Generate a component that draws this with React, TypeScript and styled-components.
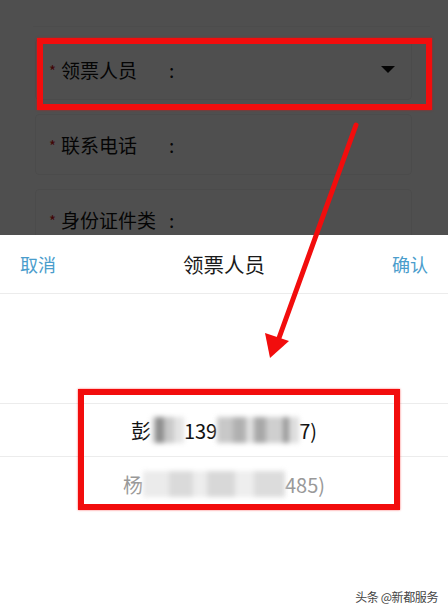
import React from 'react';
import styled, { createGlobalStyle } from 'styled-components';

const GlobalStyle = createGlobalStyle`
  html, body {
    margin: 0;
    padding: 0;
    background: #fff;
  }
  body {
    font-family: 'Noto Sans CJK SC', 'Noto Sans', sans-serif;
  }
`;

const Screen = styled.div`
  position: relative;
  width: 448px;
  height: 612px;
  overflow: hidden;
  display: flex;
  flex-direction: column;
  background: #fff;
`;

const FormArea = styled.div`
  position: relative;
  height: 235px;
  flex-shrink: 0;
  overflow: hidden;
  background: #fff;
`;

const FormGroup = styled.div`
  margin: 26px 18px 0 33px;
  padding: 12px 0 0 2px;
  border-top: 1px solid #f4f4f4;
  display: flex;
  flex-direction: column;
  gap: 14px;
`;

const Field = styled.div`
  width: 377px;
  height: 61px;
  box-sizing: border-box;
  border: 1px solid #f0f0f0;
  border-radius: 4px;
  display: flex;
  align-items: center;
  padding: 0 14px 0 13px;
  font-size: 19px;
  color: #111;
`;

const Star = styled.span`
  color: #d01010;
  font-size: 15px;
  margin-right: 5px;
  position: relative;
  top: 1px;
`;

const Label = styled.span`
  width: 108px;
  white-space: nowrap;
`;

const Colon = styled.span`
  flex: 1;
`;

const Caret = styled.span`
  width: 0;
  height: 0;
  border-left: 7px solid transparent;
  border-right: 7px solid transparent;
  border-top: 7px solid #111;
  margin-right: 2px;
`;

const Dim = styled.div`
  position: absolute;
  inset: 0;
  background: rgba(0, 0, 0, 0.69);
`;

const Sheet = styled.div`
  flex: 1;
  display: flex;
  flex-direction: column;
  background: #fff;
`;

const SheetHeader = styled.div`
  height: 58px;
  display: flex;
  align-items: center;
  justify-content: space-between;
  padding: 0 20px;
  border-bottom: 1px solid #ececec;
  font-size: 18px;
`;

const Action = styled.span`
  color: #4a9dcc;
`;

const Title = styled.span`
  color: #1a1a1a;
  font-size: 20.5px;
`;

const Wheel = styled.div`
  padding-top: 109px;
  display: flex;
  flex-direction: column;
`;

interface OptionProps {
  $active?: boolean;
}
const Option = styled.div<OptionProps>`
  height: 54px;
  box-sizing: border-box;
  display: flex;
  align-items: center;
  justify-content: center;
  font-family: 'Noto Sans CJK SC', Roboto, sans-serif;
  font-size: 20px;
  color: ${(p) => (p.$active ? '#111' : '#999')};
  border-top: ${(p) => (p.$active ? '1px solid #ececec' : 'none')};
  border-bottom: ${(p) => (p.$active ? '1px solid #ececec' : 'none')};
`;

interface MaskProps {
  $w: number;
  $tone: string;
}
const Mask = styled.span<MaskProps>`
  display: inline-block;
  width: ${(p) => p.$w}px;
  height: 26px;
  background: ${(p) => p.$tone};
  filter: blur(2.5px);
`;

const RedBox = styled.div`
  position: absolute;
  border: 6px solid #f20d0d;
  box-sizing: border-box;
  box-shadow: 0 0 2px rgba(255, 0, 0, 0.6);
  pointer-events: none;
`;

const Arrow = styled.svg`
  position: absolute;
  left: 0;
  top: 0;
  pointer-events: none;
`;

const Watermark = styled.div`
  position: absolute;
  right: 10px;
  bottom: 7px;
  font-size: 12px;
  color: #444;
  letter-spacing: -0.4px;
  text-shadow: 0 0 2px #fff;
`;

const fields = ['领票人员', '联系电话', '身份证件类'];

const App = () => {
  return (
    <Screen>
      <GlobalStyle />
      <FormArea>
        <FormGroup>
          {fields.map((label, i) => (
            <Field key={label}>
              <Star>*</Star>
              <Label>{label}</Label>
              <Colon>:</Colon>
              {i === 0 && <Caret />}
            </Field>
          ))}
        </FormGroup>
        <Dim />
      </FormArea>
      <Sheet>
        <SheetHeader>
          <Action>取消</Action>
          <Title>领票人员</Title>
          <Action>确认</Action>
        </SheetHeader>
        <Wheel>
          <Option $active>
            彭
            <Mask
              $w={33}
              $tone="linear-gradient(90deg, #e6e6e6 0 12%, #8d8d8d 12% 40%, #c9c9c9 40% 70%, #e4e4e4 70%)"
            />
            139
            <Mask
              $w={82}
              $tone="linear-gradient(90deg, #c8c8c8 0 20%, #b0b0b0 20% 35%, #e0e0e0 35% 45%, #a8a8a8 45% 60%, #cfcfcf 60% 80%, #9a9a9a 80% 88%, #dedede 88%)"
            />
            7)
          </Option>
          <Option>
            杨
            <Mask
              $w={142}
              $tone="linear-gradient(90deg, #ebebeb 0 18%, #dadada 18% 35%, #ededed 35% 45%, #d8d8d8 45% 65%, #eeeeee 65% 78%, #dcdcdc 78%)"
            />
            485)
          </Option>
        </Wheel>
      </Sheet>
      <RedBox style={{ left: 37, top: 38, width: 395, height: 72 }} />
      <RedBox style={{ left: 78, top: 389, width: 322, height: 121 }} />
      <Arrow width="448" height="612" viewBox="0 0 448 612">
        <line x1="356" y1="125" x2="279" y2="338" stroke="#f20d0d" strokeWidth="5" strokeLinecap="round" />
        <polygon points="270,358 265,333 289,341" fill="#f20d0d" />
      </Arrow>
      <Watermark>头条 @新都服务</Watermark>
    </Screen>
  );
};

export default App;
